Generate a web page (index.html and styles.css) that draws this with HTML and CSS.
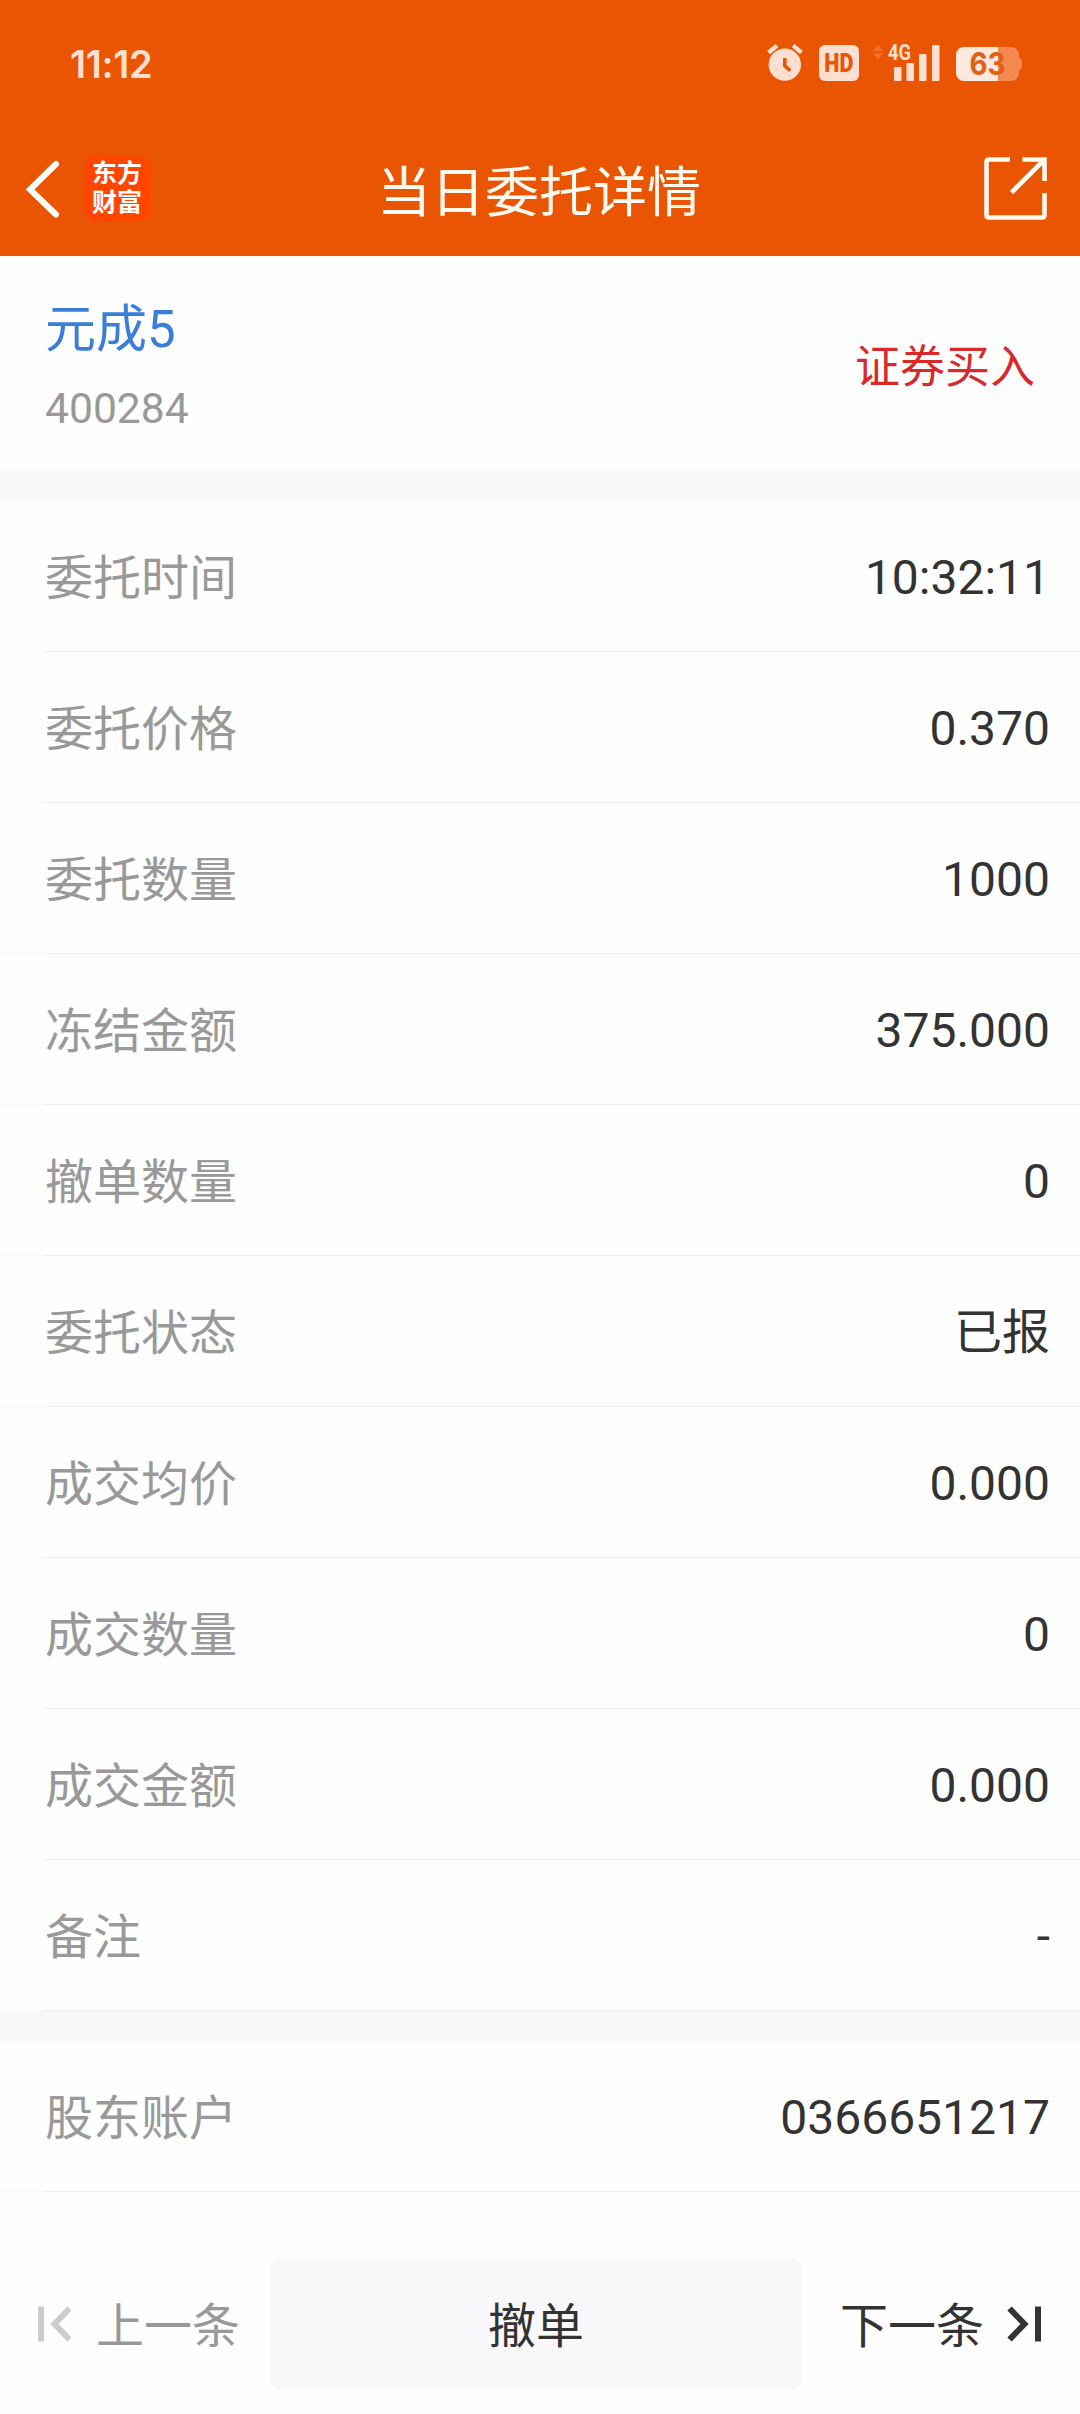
FILE: index.html
```html
<!DOCTYPE html>
<html lang="zh-CN">
<head>
    <meta charset="utf-8" />
    <title>当日委托详情</title>

    <link rel="stylesheet" href="styles.css">
</head>
<body>

    <header>
        <div class="status-bar">
            <span class="clock">11:12</span>
            <svg class="status-icons" width="264" height="44" viewBox="762 40 264 44">
                <!-- alarm -->
                <g fill="none" stroke="#ffdfcf">
                    <circle cx="784.8" cy="64.6" r="16.2" fill="#ffdfcf" stroke="none" />
                    <path d="M768.5 52.5l8.5-6.8M801.5 52.5l-8.5-6.8" stroke-width="4.2" />
                    <path d="M784.8 58v8l5.5 4.6" stroke="#ea5504" stroke-width="3.6" />
                </g>
                <!-- HD -->
                <rect x="819" y="45" width="40" height="36" rx="6" fill="#ffdfcf" />
                <text class="hd" x="838.8" y="72" text-anchor="middle" textLength="29" lengthAdjust="spacingAndGlyphs">HD</text>
                <!-- signal -->
                <path d="M873 51l5-6 5 6zM873 53.5l5 6 5-6z" fill="#f0712c" />
                <text class="net" x="888" y="60" textLength="23" lengthAdjust="spacingAndGlyphs">4G</text>
                <g fill="#ffdfcf">
                    <rect x="894" y="67" width="7.5" height="14" rx="1" />
                    <rect x="906.5" y="63" width="7.5" height="18" rx="1" />
                    <rect x="919" y="54" width="7.5" height="27" rx="1" />
                    <rect x="932" y="45" width="7.5" height="36" rx="1" />
                </g>
                <!-- battery -->
                <path d="M998 47h13a8 8 0 0 1 8 8v2.5q3.2 1 3.2 6.5t-3.2 6.5v2.5a8 8 0 0 1-8 8h-13z" fill="#f48a52" />
                <path d="M998 47h-34a8 8 0 0 0-8 8v18a8 8 0 0 0 8 8h34z" fill="#ffe9df" />
                <text class="level" x="987.5" y="75.2" text-anchor="middle" textLength="36" lengthAdjust="spacingAndGlyphs">63</text>
            </svg>
        </div>
        <div class="nav-bar">
            <div class="nav-left">
                <svg width="36" height="60" viewBox="0 0 36 60">
                    <path d="M31 5L5 30.5l26 25" fill="none" stroke="#fff" stroke-width="6" stroke-linecap="round" />
                </svg>
                <div class="logo">东方<br/>财富</div>
            </div>
            <h1>当日委托详情</h1>
            <svg class="share" width="63" height="63" viewBox="0 0 63 63">
                <path d="M26 2.5H5q-2.5 0-2.5 2.5v53q0 2.5 2.5 2.5h53q2.5 0 2.5-2.5V36M38.5 2.5h22V24M60 3L27.5 35.5" fill="none" stroke="#fffaf0" stroke-width="4.6" />
            </svg>
        </div>
    </header>

    <section class="summary">
        <div>
            <div class="name">元成5</div>
            <div class="code">400284</div>
        </div>
        <div class="side">证券买入</div>
    </section>

    <section class="rows">
        <div class="row"><span>委托时间</span><strong>10:32:11</strong></div>
        <div class="row"><span>委托价格</span><strong>0.370</strong></div>
        <div class="row"><span>委托数量</span><strong>1000</strong></div>
        <div class="row"><span>冻结金额</span><strong>375.000</strong></div>
        <div class="row"><span>撤单数量</span><strong>0</strong></div>
        <div class="row"><span>委托状态</span><strong>已报</strong></div>
        <div class="row"><span>成交均价</span><strong>0.000</strong></div>
        <div class="row"><span>成交数量</span><strong>0</strong></div>
        <div class="row"><span>成交金额</span><strong>0.000</strong></div>
        <div class="row"><span>备注</span><strong>-</strong></div>
    </section>

    <section class="rows">
        <div class="row"><span>股东账户</span><strong>0366651217</strong></div>
    </section>

    <footer>
        <div class="pager pager--off">
            <svg width="35" height="36" viewBox="0 0 35 36">
                <path d="M4 .5v35M32.5 2.5L17.5 18l15 15.5" />
            </svg>
            <span>上一条</span>
        </div>
        <div class="cancel">撤单</div>
        <div class="pager pager--next">
            <span>下一条</span>
            <svg width="35" height="36" viewBox="0 0 35 36">
                <path d="M31 .5v35M2.5 2.5L17.5 18l-15 15.5" />
            </svg>
        </div>
    </footer>
</body>
</html>
```
FILE: styles.css
```css
:root{
    --orange:#ea5504;
    --status:#ffdfcf;
    --light:#f7f8fa;
    --line:#ededed;
    --text:#333;
    --muted:#999;
}
*{
    box-sizing:border-box;
}
body{
    font-family:Roboto,"Noto Sans CJK SC",sans-serif;
    font-size:48px;
    line-height:56px;
    margin:0;
    color:var(--text);
    background:#fefefe;
}
svg{
    display:block;
}
header{
    height:256px;
    background:var(--orange);
}
.status-bar{
    display:flex;
    justify-content:space-between;
    height:124px;
    padding:40px 54px 0 70px;
}
.clock{
    font:600 38px/49px Inter,sans-serif;
    letter-spacing:-.3px;
    color:var(--status);
}
.hd,.net,.level{
    font-family:Roboto,sans-serif;
    font-weight:700;
}
.hd{
    font-size:25px;
    font-weight:900;
    fill:var(--orange);
}
.net{
    font-size:22px;
    fill:var(--status);
}
.level{
    font-family:Inter,sans-serif;
    font-size:31px;
    font-weight:700;
    fill:#e06015;
}
.nav-bar{
    display:grid;
    grid-template-columns:1fr auto 1fr;
    align-items:center;
    height:129px;
    padding:0 33px 0 25px;
}
.nav-left{
    display:flex;
    align-items:center;
    gap:22px;
}
.logo{
    width:68px;
    height:67px;
    padding:4px 0 0;
    border-radius:14px;
    background:#ff4600;
    color:#fff;
    font-size:25px;
    font-weight:700;
    line-height:29px;
    text-align:center;
}
h1{
    margin:11px -3px 0 3px;
    font-size:54px;
    font-weight:400;
    line-height:64px;
    color:#fffaf0;
}
.share{
    justify-self:end;
}
.summary{
    display:flex;
    justify-content:space-between;
    align-items:center;
    height:215px;
    padding:5px 45px 0;
}
.name{
    font-size:51px;
    line-height:60px;
    color:#3a7fd5;
}
.code{
    margin-top:23px;
    font-size:42.6px;
    line-height:50px;
    color:var(--muted);
}
.side{
    padding-top:3px;
    font-size:45px;
    color:#d8292b;
}
.rows{
    border-top:30px solid var(--light);
}
.row{
    display:flex;
    justify-content:space-between;
    align-items:center;
    height:151px;
    padding:3px 30px 0 45px;
    background:linear-gradient(to right,#f7f8fa 45px,var(--line) 45px) bottom/100% 1px no-repeat;
}
.row span{
    padding-top:2px;
    color:var(--muted);
}
.row strong{
    font-weight:400;
}
footer{
    display:flex;
    align-items:center;
    padding:66px 38px 24px 35px;
}
.pager{
    display:flex;
    align-items:center;
    gap:25px;
    width:235px;
}
.pager span{
    padding-top:5px;
}
.pager svg{
    fill:none;
    stroke:var(--text);
    stroke-width:6;
}
.pager--off{
    color:var(--muted);
}
.pager--off svg{
    margin-left:2px;
    stroke:#ccc;
}
.pager--off span{
    margin-left:-1px;
}
.pager--next{
    justify-content:flex-end;
    gap:23px;
    width:240px;
}
.cancel{
    width:532px;
    height:132px;
    border-radius:12px;
    background:#f8f8fa;
    line-height:138px;
    text-align:center;
}
```
